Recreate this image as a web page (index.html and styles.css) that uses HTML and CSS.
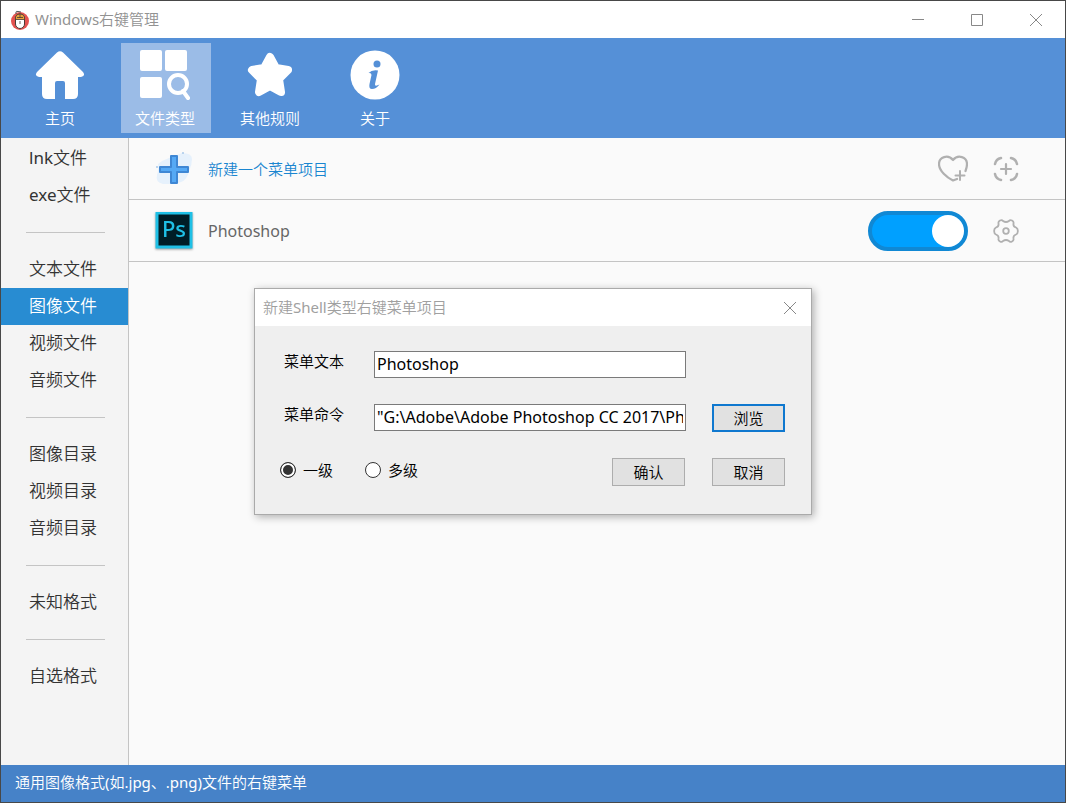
FILE: index.html
```html
<!DOCTYPE html>
<html lang="zh-CN">
<head>
  <meta charset="UTF-8">
  <meta name="viewport" content="width=device-width, initial-scale=1.0">
  <title>Windows右键管理</title>
  <link rel="stylesheet" href="styles.css">
</head>
<body>
  <div class="window">
    <!-- 标题栏 -->
    <header class="titlebar">
      <svg class="logo" viewBox="0 0 20 20">
        <circle cx="10" cy="11" r="9" fill="#e4524f"/>
        <path d="M6 4V2Q6 1 8 1.5L11 2" fill="none" stroke="#555" stroke-width="1"/>
        <rect x="5.500" y="4" width="9" height="14.500" rx="4.500" fill="#fff" stroke="#4b3a33"/>
        <path d="M5.500 9.500V7Q6 4 10 4T14.500 7V9.500Z" fill="#e8a33c" stroke="#4b3a33" stroke-width="0.800"/>
        <path d="M10 4V8M7 7.500H13" stroke="#4b3a33" stroke-width="0.800"/>
        <path d="M10 11V14" stroke="#4b3a33" stroke-width="0.800"/>
      </svg>
      <h1>Windows右键管理</h1>
      <div class="window-buttons">
        <button aria-label="最小化"><svg viewBox="0 0 14 14"><path d="M1 6.500H13"/></svg></button>
        <button aria-label="最大化"><svg viewBox="0 0 14 14"><path d="M1.500 1.500H12.500V12.500H1.500Z"/></svg></button>
        <button aria-label="关闭"><svg viewBox="0 0 14 14"><path d="M1 1L13 13M13 1L1 13"/></svg></button>
      </div>
    </header>

    <!-- 工具栏 -->
    <nav class="toolbar">
      <button class="tool">
        <svg viewBox="0 0 50 50" fill="#fff">
          <path d="M22 2.500Q25 0 28 2.500L48 22Q51 26 46 27H43V44Q43 49 38 49H30V33Q30 31 28 31H22Q20 31 20 33V49H12Q7 49 7 44V27H4Q-1 26 2 22Z"/>
        </svg>
        主页
      </button>
      <button class="tool active">
        <svg viewBox="0 0 50 50" fill="#fff">
          <rect x="0" y="0" width="22" height="21" rx="2"/>
          <rect x="25" y="0" width="22" height="21" rx="2"/>
          <rect x="0" y="27" width="22" height="21" rx="2"/>
          <circle cx="38" cy="34" r="9" fill="none" stroke="#fff" stroke-width="4"/>
          <path d="M43 41L48 48" stroke="#fff" stroke-width="4" stroke-linecap="round"/>
        </svg>
        文件类型
      </button>
      <button class="tool">
        <svg viewBox="0 0 50 50" fill="#fff">
          <path d="M25 7L31 18L43 20L34 29L36 42L25 36L14 42L16 29L7 20L19 18Z" stroke="#fff" stroke-width="8" stroke-linejoin="round"/>
        </svg>
        其他规则
      </button>
      <button class="tool">
        <svg viewBox="0 0 50 50">
          <circle cx="25" cy="25" r="24.500" fill="#fff"/>
          <circle cx="27" cy="14" r="3.500" fill="#5590d7"/>
          <path d="M18.500 23Q22 19.500 28 20.500L25 34Q24.500 37 29.500 34.500Q26 39 22 39Q18.500 39 19.500 34L21.500 25Q21.500 22.500 18.500 23Z" fill="#5590d7"/>
        </svg>
        关于
      </button>
    </nav>

    <div class="main">
      <!-- 文件类型列表 -->
      <nav class="sidebar">
        <a href="#">lnk文件</a>
        <a href="#">exe文件</a>
        <hr>
        <a href="#">文本文件</a>
        <a href="#" class="active">图像文件</a>
        <a href="#">视频文件</a>
        <a href="#">音频文件</a>
        <hr>
        <a href="#">图像目录</a>
        <a href="#">视频目录</a>
        <a href="#">音频目录</a>
        <hr>
        <a href="#">未知格式</a>
        <hr>
        <a href="#">自选格式</a>
      </nav>

      <!-- 菜单项目 -->
      <main class="content">
        <div class="item">
          <svg class="item-icon" viewBox="0 0 38 38">
            <path d="M3 14Q8 10 14 8T27 3Q37 3 37 9T34 21Q32 30 26 32T8 34Q0 32 2 25T3 14Z" fill="#e6f1fc"/>
            <circle cx="28" cy="3" r="1" fill="#a9c8ea"/>
            <circle cx="2" cy="17" r="1" fill="#a9c8ea"/>
            <path d="M16 6H22V17H33V22H22V33H16V22H5V17H16Z" fill="#55a9f5" stroke="#3f87d4" stroke-width="2" stroke-linejoin="round"/>
          </svg>
          <a class="new-item" href="#">新建一个菜单项目</a>
          <button class="icon-button" aria-label="收藏">
            <svg viewBox="0 0 30 30">
              <path d="M27.500 17Q29 13 29 10C29 3 20 0 15 6C10 0 1 3 1 10C1 17 9 23.500 15 26.500L19 25" stroke-width="2.200"/>
              <path d="M22 17V26M17.500 21.500H26.500" stroke-width="2"/>
            </svg>
          </button>
          <button class="icon-button" aria-label="添加">
            <svg viewBox="0 0 30 30">
              <path d="M4 10Q5 5 10 4M20 4Q25 5 26 10M26 20Q25 25 20 26M10 26Q5 25 4 20" stroke-width="2.500"/>
              <path d="M15 10V20M10 15H20" stroke-width="2.200"/>
            </svg>
          </button>
        </div>
        <div class="item">
          <svg class="item-icon ps" viewBox="0 0 38 38">
            <rect x="2" y="1" width="34" height="34" fill="#001d26" stroke="#1fc0e6" stroke-width="3"/>
            <text x="19" y="25" text-anchor="middle">Ps</text>
          </svg>
          <label class="item-name" for="ps-on">Photoshop</label>
          <input class="switch" type="checkbox" id="ps-on" checked>
          <button class="icon-button" aria-label="设置">
            <svg viewBox="0 0 30 30">
              <path d="M9 4.500Q11 3.500 12 5Q15 7 18 5Q19 3.500 21 4.500Q23 5.500 22.500 7.500Q22 10.500 25 11.500Q27 12.500 26.800 15Q27 17.500 25 18.500Q22 19.500 22.500 22.500Q23 24.500 21 25.500Q19 26.500 18 25Q15 23 12 25Q11 26.500 9 25.500Q7 24.500 7.500 22.500Q8 19.500 5 18.500Q3 17.500 3.200 15Q3 12.500 5 11.500Q8 10.500 7.500 7.500Q7 5.500 9 4.500Z" stroke-width="1.800"/>
              <circle cx="15" cy="15" r="2.800" stroke-width="1.800"/>
            </svg>
          </button>
        </div>
      </main>
    </div>

    <footer class="statusbar">通用图像格式(如.jpg、.png)文件的右键菜单</footer>
  </div>

  <!-- 新建项目对话框 -->
  <div class="overlay">
    <form class="dialog" role="dialog" aria-labelledby="dialog-title">
      <div class="dialog-header">
        <h2 id="dialog-title">新建Shell类型右键菜单项目</h2>
        <button type="button" class="dialog-close" aria-label="关闭"><svg viewBox="0 0 14 14"><path d="M1 1L13 13M13 1L1 13"/></svg></button>
      </div>
      <div class="dialog-body">
        <div class="row short">
          <label class="field-label" for="menu-text">菜单文本</label>
          <input type="text" id="menu-text" value="Photoshop">
        </div>
        <div class="row">
          <label class="field-label" for="menu-command">菜单命令</label>
          <input type="text" id="menu-command" value='"G:\Adobe\Adobe Photoshop CC 2017\Ph'>
          <button type="button" class="button focused">浏览</button>
        </div>
        <div class="row">
          <label class="radio"><input type="radio" name="level" checked>一级</label>
          <label class="radio"><input type="radio" name="level">多级</label>
          <button type="button" class="button confirm">确认</button>
          <button type="button" class="button">取消</button>
        </div>
      </div>
    </form>
  </div>
</body>
</html>
```

FILE: styles.css
```css
* {
  box-sizing: border-box;
}
body {
  margin: 0;
  font-family: "Noto Sans", "Noto Sans CJK SC DemiLight", "Noto Sans CJK SC", sans-serif;
  font-size: 15px;
  color: #333;
}
button, input {
  font: inherit;
  color: inherit;
}
button {
  border: none;
  padding: 0;
  background: none;
}
a {
  color: inherit;
  text-decoration: none;
}
h1, h2 {
  margin: 0;
  font-size: 15px;
  font-weight: normal;
}
.window {
  display: flex;
  flex-direction: column;
  min-height: 100vh;
  border: 1px solid #484848;
  background: #fafafa;
}

/* 标题栏 */
.titlebar {
  display: flex;
  align-items: center;
  height: 37px;
  padding-left: 9px;
  background: #fff;
  color: #929292;
  line-height: 20px;
}
.titlebar h1, .dialog-header h2 {
  padding-bottom: 2px;
}
.logo {
  width: 20px;
  height: 20px;
  margin-right: 5px;
}
.window-buttons {
  display: flex;
  margin-left: auto;
}
.window-buttons button {
  display: flex;
  justify-content: center;
  width: 59px;
}
.window-buttons svg, .dialog-close svg {
  width: 14px;
  height: 14px;
  fill: none;
  stroke: #888;
}

/* 工具栏 */
.toolbar {
  display: flex;
  gap: 15px;
  padding: 5px 15px;
  background: #5590d7;
}
.tool {
  display: flex;
  flex-direction: column;
  align-items: center;
  gap: 7px;
  width: 90px;
  height: 90px;
  padding: 7px 2px 0 0;
  color: #fff;
  font-weight: 300;
  line-height: 22px;
}
.tool svg {
  width: 50px;
  height: 50px;
}
.tool.active {
  background: #9bbce7;
}

.main {
  display: flex;
  flex: 1;
}

/* 侧边栏 */
.sidebar {
  width: 128px;
  padding-top: 2px;
  background: #f4f4f4;
  border-right: 1px solid #c4c4c4;
  font-size: 17px;
}
.sidebar a {
  display: block;
  height: 37px;
  padding-left: 28px;
  line-height: 36px;
}
.sidebar a.active {
  background: #288cd2;
  color: #fff;
}
.sidebar hr {
  margin: 18px 23px 18px 25px;
  border: none;
  border-top: 1px solid #c4c4c4;
}

/* 项目列表 */
.content {
  flex: 1;
}
.item {
  display: flex;
  align-items: center;
  height: 62px;
  padding: 0 44px 0 26px;
  border-bottom: 1px solid #c4c4c4;
}
.item-icon {
  width: 38px;
  height: 38px;
  margin-right: 15px;
}
.ps {
  filter: drop-shadow(0 1px 1px #999);
}
.ps text {
  font-family: "Noto Sans", sans-serif;
  font-size: 22px;
  font-weight: 500;
  fill: #1fc0e6;
}
.new-item, .item-name {
  margin-right: auto;
}
.new-item {
  color: #1a86d0;
}
.item-name {
  color: #666;
  font-size: 16px;
}
.icon-button {
  width: 30px;
  height: 30px;
  margin-left: 23px;
}
.icon-button svg {
  display: block;
  fill: none;
  stroke: #b0b0b0;
  stroke-linecap: round;
  stroke-linejoin: round;
}
.switch {
  display: flex;
  align-items: center;
  appearance: none;
  width: 100px;
  height: 40px;
  margin: 0;
  padding: 0;
  border: 4px solid #1088d4;
  border-radius: 20px;
  background: #00a0ff;
}
.switch::before {
  content: "";
  width: 32px;
  height: 32px;
  border-radius: 50%;
  background: #fff;
}
.switch:checked::before {
  margin-left: auto;
}

.statusbar {
  height: 37px;
  padding-left: 14px;
  background: #4682c8;
  color: #fff;
  line-height: 35px;
}

/* 对话框 */
.overlay {
  position: absolute;
  inset: 0;
  display: flex;
  align-items: center;
  justify-content: center;
}
.dialog {
  width: 558px;
  border: 1px solid #aaa;
  background: #efefef;
  box-shadow: 2px 2px 8px rgba(0, 0, 0, 0.3);
}
.dialog-header {
  display: flex;
  align-items: center;
  justify-content: space-between;
  height: 37px;
  padding: 0 14px 0 8px;
  background: #fff;
  color: #a0a0a0;
}
.dialog-close {
  display: flex;
}
.dialog-body {
  display: flex;
  flex-direction: column;
  gap: 26px;
  padding: 25px 26px 28px 25px;
  color: #000;
}
.row {
  display: flex;
  height: 28px;
}
.short {
  height: 27px;
  padding-right: 99px;
}
.field-label {
  width: 94px;
  padding-left: 4px;
  line-height: 20px;
}
.row input[type="text"] {
  flex: 1;
  min-width: 0;
  height: 27px;
  padding: 0 2px 2px;
  border: 1px solid #7a7a7a;
  background: #fff;
  font-size: 16px;
}
.button {
  width: 73px;
  height: 28px;
  margin-left: 27px;
  border: 1px solid #adadad;
  background: #e1e1e1;
  line-height: 22px;
}
.button.focused {
  margin-left: 26px;
  border: 2px solid #0f78cf;
}
.button.confirm {
  margin-left: auto;
}
.radio {
  display: flex;
  align-items: center;
  gap: 7px;
  height: 24px;
  margin-right: 32px;
  line-height: 20px;
}
.radio input {
  appearance: none;
  width: 16px;
  height: 16px;
  margin: 0;
  border: 1px solid #333;
  border-radius: 50%;
  background: #fff;
}
.radio input:checked {
  background: #333;
  box-shadow: inset 0 0 0 2px #fff;
}
```
